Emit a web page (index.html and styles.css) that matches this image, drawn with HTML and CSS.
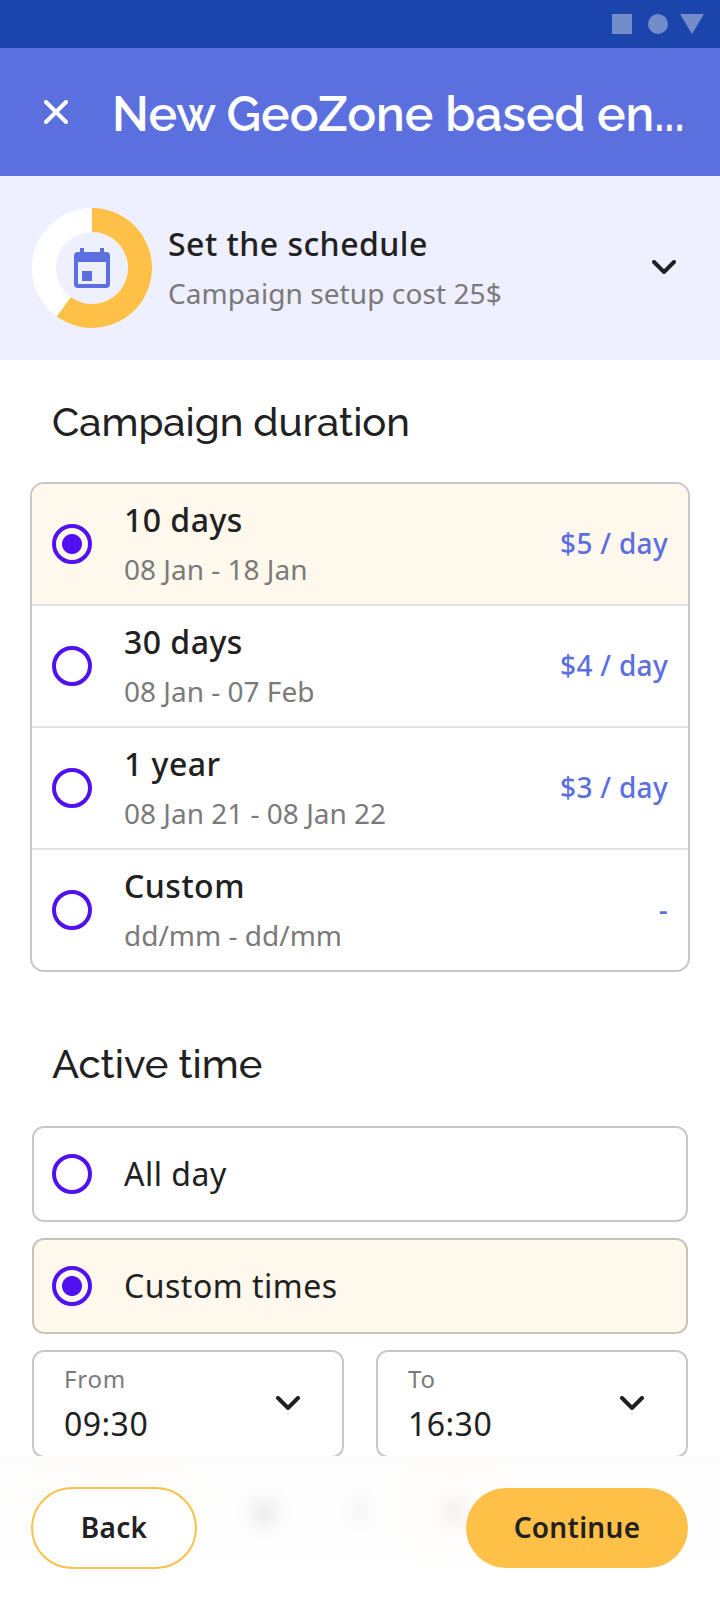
FILE: index.html
```html
<!DOCTYPE html>
<html lang="en">
<head>
<meta charset="utf-8">
<title>New GeoZone campaign</title>
<link rel="stylesheet" href="styles.css">
</head>
<body>
<div class="screen">
  <div class="status-bar">
    <svg width="92" height="20" viewBox="0 0 92 20"><rect width="20" height="20"/><circle cx="46" cy="10" r="10"/><path d="M68 0h24L80 20z"/></svg>
  </div>
  <header class="app-bar">
    <svg class="close" width="24" height="24" viewBox="0 0 24 24"><path d="M2 2l20 20M22 2L2 22"/></svg>
    <h1 class="app-title">New GeoZone based en...</h1>
  </header>
  <section class="step">
    <svg class="donut" width="120" height="120" viewBox="0 0 120 120">
      <circle class="track" cx="60" cy="60" r="48"/>
      <path class="progress" d="M60 12A48 48 0 1 1 31.79 98.83"/>
      <path class="calendar" fill-rule="evenodd" d="M48 40h4v4h16v-4h4v4h2q4 0 4 4v28q0 4-4 4H46q-4 0-4-4V48q0-4 4-4h2zM46 54v22h28V54zM50 63h10v10H50z"/>
    </svg>
    <div class="lines step-lines">
      <div class="primary step-title">Set the schedule</div>
      <div class="secondary step-cost">Campaign setup cost 25$</div>
    </div>
    <svg class="chevron" width="24" height="14" viewBox="0 0 24 14"><path d="M2 2l10 10L22 2"/></svg>
  </section>
  <main class="content">
    <h2 class="heading duration">Campaign duration</h2>
    <div class="plans">
      <div class="plan selected"><span class="radio on"></span><div class="lines"><div class="primary">10 days</div><div class="secondary">08 Jan - 18 Jan</div></div><span class="price">$5 / day</span></div>
      <div class="plan"><span class="radio"></span><div class="lines"><div class="primary">30 days</div><div class="secondary">08 Jan - 07 Feb</div></div><span class="price">$4 / day</span></div>
      <div class="plan"><span class="radio"></span><div class="lines"><div class="primary">1 year</div><div class="secondary">08 Jan 21 - 08 Jan 22</div></div><span class="price">$3 / day</span></div>
      <div class="plan"><span class="radio"></span><div class="lines"><div class="primary">Custom</div><div class="secondary">dd/mm - dd/mm</div></div><span class="price">-</span></div>
    </div>
    <h2 class="heading active">Active time</h2>
    <div class="times">
      <div class="option"><span class="radio"></span><span class="option-label">All day</span></div>
      <div class="option selected"><span class="radio on"></span><span class="option-label">Custom times</span></div>
      <div class="selects">
        <div class="select"><div><div class="select-label">From</div><div class="select-value">09:30</div></div><svg class="chevron" width="24" height="14" viewBox="0 0 24 14"><path d="M2 2l10 10L22 2"/></svg></div>
        <div class="select"><div><div class="select-label">To</div><div class="select-value">16:30</div></div><svg class="chevron" width="24" height="14" viewBox="0 0 24 14"><path d="M2 2l10 10L22 2"/></svg></div>
      </div>
    </div>
  </main>
  <footer class="actions">
    <button class="button back">Back</button>
    <button class="button continue">Continue</button>
  </footer>
</div>
</body>
</html>
```

FILE: styles.css
```css
* { box-sizing: border-box; }
body { margin: 0; background: #fff; color: #212121; font-family: "Noto Sans", sans-serif; }
.screen { width: 720px; height: 1600px; display: flex; flex-direction: column; overflow: hidden; }
.status-bar { flex: none; height: 48px; padding: 14px 16px 0 0; display: flex; justify-content: flex-end; background: #1b45ac; }
.status-bar svg { fill: #728dca; }
.app-bar { flex: none; height: 128px; padding: 0 0 0 44px; display: flex; align-items: center; background: #5c6fdf; color: #fff; }
.close { fill: none; stroke: #fff; stroke-width: 4; stroke-linecap: round; }
.app-title { margin: 0 0 0 44px; padding-top: 3px; font: 600 48px/56px Raleway, Lato, sans-serif; letter-spacing: 0; white-space: nowrap; }
.step { flex: none; height: 184px; padding: 0 44px 0 32px; display: flex; align-items: center; background: #eeefff; }
.donut { fill: none; }
.track { stroke: #fff; stroke-width: 24; }
.progress { stroke: #ffc048; stroke-width: 24; }
.calendar { fill: #5c6fdf; }
.lines { flex: 1; }
.step-lines { margin-left: 16px; }
.primary { font-size: 32px; line-height: 48px; font-weight: 500; letter-spacing: 0.48px; }
.secondary { padding-top: 2px; font-size: 28px; line-height: 46px; color: #7a7a7a; }
.step-cost { letter-spacing: 0.08px; }
.chevron { flex: none; margin-bottom: 2px; fill: none; stroke: #212121; stroke-width: 4; stroke-linecap: round; stroke-linejoin: round; }
.content { flex: none; height: 1096px; padding: 0 32px; overflow: hidden; }
.heading { margin: 0 0 0 20px; font: 500 40px/48px Raleway, Lato, sans-serif; letter-spacing: 0; }
.duration { margin-top: 38px; }
.plans { margin: 36px -2px 0; border: 2px solid #c8c8c8; border-radius: 14px; overflow: hidden; }
.plan { height: 120px; padding: 0 20px; display: flex; align-items: center; }
.plan + .plan { height: 122px; border-top: 2px solid #e2e2e2; }
.selected { background: #fff8ec; }
.radio { flex: none; width: 40px; height: 40px; margin-right: 32px; border: 4px solid #5010f0; border-radius: 50%; }
.radio.on { background: radial-gradient(circle, #5010f0 9.5px, transparent 10.5px); }
.price { padding-bottom: 1px; font-size: 28px; line-height: 39px; font-weight: 500; letter-spacing: 0.3px; color: #5c6fdf; }
.active { margin-top: 68px; }
.times { display: grid; gap: 16px; margin-top: 38px; }
.option { height: 96px; padding: 0 18px; display: flex; align-items: center; border: 2px solid #c8c8c8; border-radius: 12px; }
.option.selected { border-color: #c9c4ba; }
.option-label { font-size: 32px; line-height: 48px; letter-spacing: 0.5px; }
.selects { display: grid; grid-template-columns: 1fr 1fr; gap: 32px; }
.select { height: 108px; padding: 0 42px 0 30px; display: flex; justify-content: space-between; align-items: center; border: 2px solid #c8c8c8; border-radius: 12px; }
.select-label { font-size: 24px; line-height: 40px; letter-spacing: 0.8px; color: #7a7a7a; }
.select-value { padding: 1px 0; font-size: 32px; line-height: 48px; letter-spacing: 0.48px; }
.actions {
  flex: 1; padding: 31px 32px 0 31px; display: flex; justify-content: space-between; align-items: flex-start;
  background:
    radial-gradient(circle at 264px 57px, rgba(0,0,0,.065), rgba(0,0,0,.035) 12px, rgba(0,0,0,.01) 20px, transparent 30px),
    radial-gradient(ellipse 20px 26px at 360px 55px, rgba(0,0,0,.035), rgba(0,0,0,.015) 50%, transparent),
    radial-gradient(circle at 455px 56px, rgba(0,0,0,.045), rgba(0,0,0,.015) 13px, transparent 24px),
    radial-gradient(ellipse 80px 70px at 455px 50px, rgba(255,192,72,.03), transparent),
    radial-gradient(ellipse 120px 60px at 110px 40px, rgba(255,192,72,.03), transparent),
    linear-gradient(#fcfcfc, #fefefe 26px, #fefefe 100px, #fff 115px);
}
.button { padding: 0 0 2px; border: 0; font: 600 28px/40px "Noto Sans", sans-serif; letter-spacing: 0.28px; color: #212121; }
.back { width: 166px; height: 82px; border: 2px solid #ffc048; border-radius: 41px; background: #fff; }
.continue { width: 222px; height: 80px; margin-top: 1px; border-radius: 40px; background: #ffc048; }
```
